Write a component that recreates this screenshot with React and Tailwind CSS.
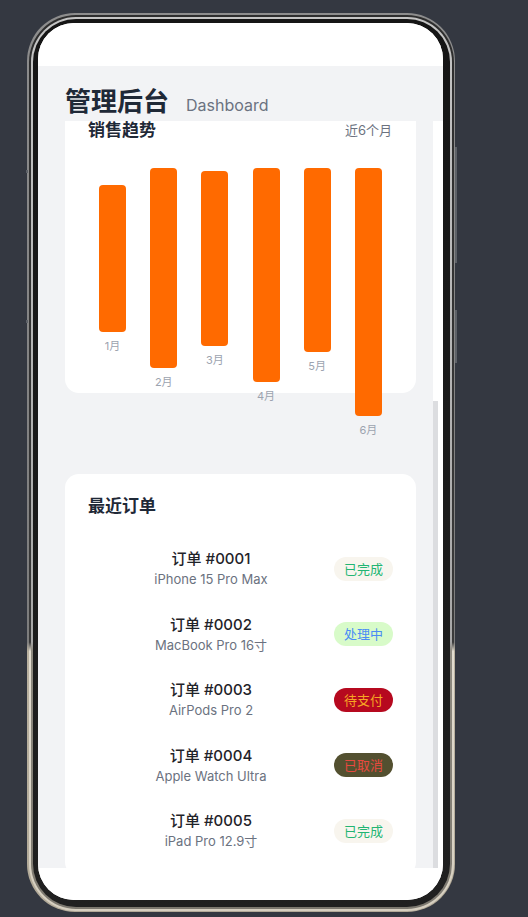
import React from "react";

const bars = [
  { m: "1月", mt: 17, h: 147 },
  { m: "2月", mt: 0, h: 200 },
  { m: "3月", mt: 3, h: 175 },
  { m: "4月", mt: 0, h: 214 },
  { m: "5月", mt: 0, h: 184 },
  { m: "6月", mt: 0, h: 248 },
];

const orders = [
  { id: "#0001", name: "iPhone 15 Pro Max", status: "已完成", cls: "bg-[#f8f5ee] text-[#22b573]" },
  { id: "#0002", name: "MacBook Pro 16寸", status: "处理中", cls: "bg-[#d8fbc9] text-[#4a8cf5]" },
  { id: "#0003", name: "AirPods Pro 2", status: "待支付", cls: "bg-[#b6091f] text-[#f6a623]" },
  { id: "#0004", name: "Apple Watch Ultra", status: "已取消", cls: "bg-[#535030] text-[#e9493f]" },
  { id: "#0005", name: "iPad Pro 12.9寸", status: "已完成", cls: "bg-[#f8f5ee] text-[#22b573]" },
];

const font = { fontFamily: '"Inter", "Noto Sans CJK SC", sans-serif' };

export default function App() {
  return (
    <div className="w-[528px] h-[917px] bg-[#343841] pl-[27px] pt-[13px]" style={font}>
      <div className="relative w-[428px] h-[899px]">
        <div className="absolute -right-[2px] top-[134px] h-[116px] w-[2px] bg-[#5e6268]" />
        <div className="absolute -right-[2px] top-[297px] h-[53px] w-[2px] bg-[#5e6268]" />
        <div className="absolute -left-[1px] top-[157px] h-[3px] w-[2px] bg-[#5e6268]" />
        <div className="absolute -left-[1px] top-[307px] h-[3px] w-[2px] bg-[#5e6268]" />
        <div className="w-full h-full rounded-[48px] p-[1.5px] bg-[linear-gradient(180deg,#8d8d8d_0%,#7d7d7d_70%,#b9b19f_71%,#b2aa98_100%)]">
          <div className="w-full h-full rounded-[47px] p-[2px] bg-[linear-gradient(180deg,#2d2d2d_0%,#3a3a3a_70%,#e2dccf_71%,#d6cfc0_100%)]">
            <div className="w-full h-full rounded-[45px] p-[2px] bg-[linear-gradient(180deg,#c4c4c4_0%,#a8a8a8_70%,#8e8a80_71%,#7c786f_100%)]">
              <div className="w-full h-full rounded-[43px] pl-[5.5px] pr-[6.5px] pt-[4.5px] pb-[6.5px] bg-[linear-gradient(180deg,#151515_0%,#202020_100%)]">
                <div className="w-full h-full rounded-[36px] overflow-hidden bg-white flex flex-col">
                  <div className="h-[43px] bg-white shrink-0" />
                  <div className="h-[55px] shrink-0 bg-[#f2f3f5] px-[27px] pt-[18px] flex items-baseline gap-[17px]">
                    <span className="text-[26px] leading-[36px] font-bold text-[#1f2937]">管理后台</span>
                    <span className="text-[16px] leading-[24px] text-[#6b7280]">Dashboard</span>
                  </div>
                  <div className="h-[747px] shrink-0 flex">
                    <div className="w-[395px] h-full bg-[#f2f3f5] overflow-hidden pl-[27px] pr-[17px]">
                      <div className="-mt-[23px]">
                        <div className="bg-white rounded-[14px] h-[295px] pl-[23px] pr-[24px] pt-[21px]">
                          <div className="flex justify-between items-center h-[24px]">
                            <span className="text-[17px] font-bold text-[#1f2937]">销售趋势</span>
                            <span className="text-[13px] text-[#6b7280]">近6个月</span>
                          </div>
                          <div className="mt-[25px] -ml-[1px] -mr-[2px] flex justify-around items-start">
                            {bars.map((b) => (
                              <div key={b.m} className="w-[27px] flex flex-col items-center">
                                <div
                                  className="w-[27px] rounded-[4px] bg-[#ff6a00]"
                                  style={{ marginTop: b.mt, height: b.h }}
                                />
                                <span className="mt-[6px] text-[11px] leading-[17px] text-[#9ca3af] whitespace-nowrap">
                                  {b.m}
                                </span>
                              </div>
                            ))}
                          </div>
                        </div>
                        <div className="mt-[81px] bg-white rounded-[14px] px-[23px] pt-[21px] pb-[12px]">
                          <div className="h-[24px] flex items-center text-[17px] font-bold text-[#1f2937]">最近订单</div>
                          <div className="mt-[17px] flex flex-col">
                            {orders.map((o) => (
                              <div key={o.id} className="flex items-center py-[12px]">
                                <div className="flex-1 flex flex-col items-center">
                                  <span className="text-[15px] leading-[22px] font-medium text-[#1f2329]">
                                    订单 {o.id}
                                  </span>
                                  <span className="text-[13px] leading-[19.5px] text-[#6b7280]">{o.name}</span>
                                </div>
                                <span className={`px-[10px] h-[24px] leading-[24px] rounded-full text-[13px] ${o.cls}`}>
                                  {o.status}
                                </span>
                              </div>
                            ))}
                          </div>
                        </div>
                      </div>
                    </div>
                    <div className="w-[10px] h-full bg-white">
                      <div className="mt-[280px] w-[5px] h-[467px] bg-[#dcdde0]" />
                    </div>
                  </div>
                  <div className="flex-1 bg-white" />
                </div>
              </div>
            </div>
          </div>
        </div>
      </div>
    </div>
  );
}
